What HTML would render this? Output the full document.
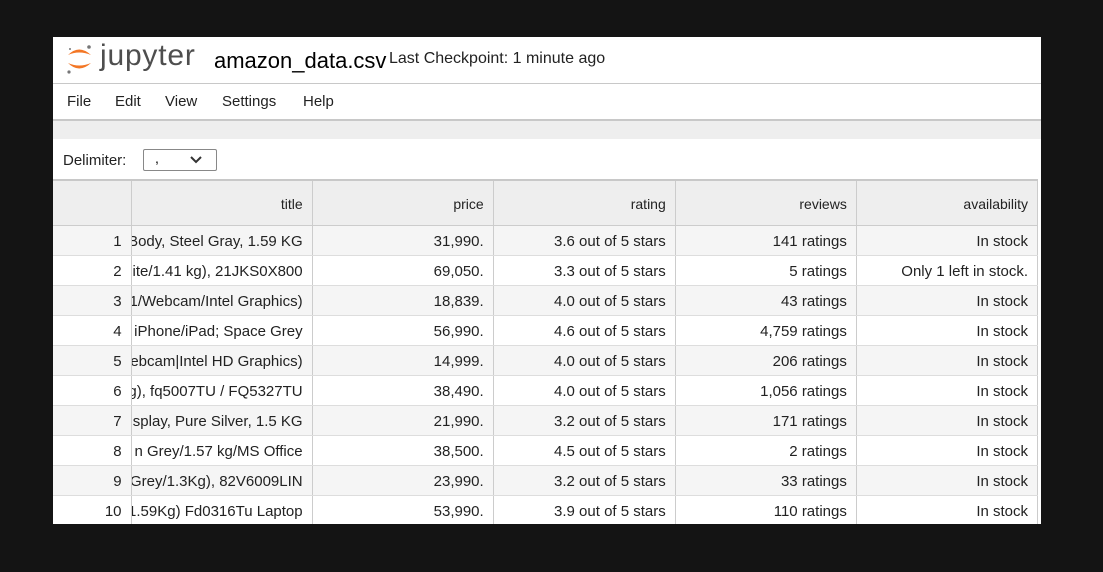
<!DOCTYPE html>
<html><head><style>
body{margin:0;width:1103px;height:572px;background:#141414;position:relative;overflow:hidden;font-family:"Liberation Sans",Arial,sans-serif}
#p{position:absolute;left:53px;top:37px;width:988px;height:487px;background:#fff;overflow:hidden}
#hdr{position:absolute;left:0;top:0;width:988px;height:46px;border-bottom:1px solid #c8c8c8}
#menu{position:absolute;left:0;top:47px;width:988px;height:35px;border-bottom:2px solid #c8c8c8;font-size:15px;color:#222}
#menu span{position:absolute;top:9px}
#band{position:absolute;left:0;top:84px;width:988px;height:18px;background:#eeeeee}
#delim{position:absolute;left:10px;top:115px;font-size:15px;color:#222}
#sel{position:absolute;left:90px;top:112px;width:72px;height:20px;border:1px solid #888;border-radius:2px}
table{position:absolute;left:0;top:142px;border-collapse:collapse;font-size:15px;color:#222;table-layout:fixed;width:985px}
td,th{height:29px;padding:0;text-align:right;border-right:1px solid #ccc;border-bottom:1px solid #ddd;white-space:nowrap;overflow:hidden;font-weight:normal}
td>div,th>div{display:flex;justify-content:flex-end;overflow:hidden;padding-right:9px;padding-top:2px}
th{height:44px;background:#eeeeee;border-top:2px solid #c8c8c8;border-bottom:1px solid #ccc;font-size:14px}
tr:nth-child(even) td{background:#f5f5f5}
</style></head><body>
<div id="p">
<div id="hdr">
<svg style="position:absolute;left:12px;top:5px" width="30" height="34" viewBox="0 0 30 34">
<path d="M3 13 Q14 2 26 13 Q14 8 3 13Z" fill="#f37726"/>
<path d="M3 21 Q14 32 26 21 Q14 26 3 21Z" fill="#f37726"/>
<circle cx="24" cy="5" r="1.8" fill="#767677"/><circle cx="4" cy="30" r="1.6" fill="#767677"/><circle cx="5" cy="7" r="1" fill="#767677"/>
</svg>
<div style="position:absolute;left:47px;top:2px;font-size:30px;color:#4e4e4e;letter-spacing:0.8px">jupyter</div>
<div style="position:absolute;left:161px;top:11px;font-size:22px;color:#000">amazon_data.csv</div>
<div style="position:absolute;left:336px;top:13px;font-size:16px;color:#222">Last Checkpoint: 1 minute ago</div>
</div>
<div id="menu"><span style="left:14px">File</span><span style="left:62px">Edit</span><span style="left:112px">View</span><span style="left:169px">Settings</span><span style="left:250px">Help</span></div>
<div id="band"></div>
<div id="delim">Delimiter:</div>
<div id="sel"><span style="position:absolute;left:11px;top:0;font-size:14px">,</span>
<svg style="position:absolute;left:46px;top:6px" width="12" height="8"><path d="M1 1 L6 6 L11 1" stroke="#333" stroke-width="2" fill="none"/></svg></div>
<table>
<colgroup><col style="width:78px"><col style="width:181px"><col style="width:181px"><col style="width:182px"><col style="width:181px"><col style="width:181px"></colgroup>
<tr><th style="background:#eeeeee"><div>&nbsp;</div></th><th><div>title</div></th><th><div>price</div></th><th><div>rating</div></th><th><div>reviews</div></th><th><div>availability</div></th></tr>
<tr><td class="n"><div>1</div></td><td><div>Body, Steel Gray, 1.59 KG</div></td><td><div>31,990.</div></td><td><div>3.6 out of 5 stars</div></td><td><div>141 ratings</div></td><td><div>In stock</div></td></tr>
<tr><td class="n"><div>2</div></td><td><div>ite/1.41 kg), 21JKS0X800</div></td><td><div>69,050.</div></td><td><div>3.3 out of 5 stars</div></td><td><div>5 ratings</div></td><td><div>Only 1 left in stock.</div></td></tr>
<tr><td class="n"><div>3</div></td><td><div>1/Webcam/Intel Graphics)</div></td><td><div>18,839.</div></td><td><div>4.0 out of 5 stars</div></td><td><div>43 ratings</div></td><td><div>In stock</div></td></tr>
<tr><td class="n"><div>4</div></td><td><div>iPhone/iPad; Space Grey</div></td><td><div>56,990.</div></td><td><div>4.6 out of 5 stars</div></td><td><div>4,759 ratings</div></td><td><div>In stock</div></td></tr>
<tr><td class="n"><div>5</div></td><td><div>ebcam|Intel HD Graphics)</div></td><td><div>14,999.</div></td><td><div>4.0 out of 5 stars</div></td><td><div>206 ratings</div></td><td><div>In stock</div></td></tr>
<tr><td class="n"><div>6</div></td><td><div>g), fq5007TU / FQ5327TU</div></td><td><div>38,490.</div></td><td><div>4.0 out of 5 stars</div></td><td><div>1,056 ratings</div></td><td><div>In stock</div></td></tr>
<tr><td class="n"><div>7</div></td><td><div>splay, Pure Silver, 1.5 KG</div></td><td><div>21,990.</div></td><td><div>3.2 out of 5 stars</div></td><td><div>171 ratings</div></td><td><div>In stock</div></td></tr>
<tr><td class="n"><div>8</div></td><td><div>n Grey/1.57 kg/MS Office</div></td><td><div>38,500.</div></td><td><div>4.5 out of 5 stars</div></td><td><div>2 ratings</div></td><td><div>In stock</div></td></tr>
<tr><td class="n"><div>9</div></td><td><div>Grey/1.3Kg), 82V6009LIN</div></td><td><div>23,990.</div></td><td><div>3.2 out of 5 stars</div></td><td><div>33 ratings</div></td><td><div>In stock</div></td></tr>
<tr><td class="n"><div>10</div></td><td><div>1.59Kg) Fd0316Tu Laptop</div></td><td><div>53,990.</div></td><td><div>3.9 out of 5 stars</div></td><td><div>110 ratings</div></td><td><div>In stock</div></td></tr>
</table>
</div>
</body></html>
